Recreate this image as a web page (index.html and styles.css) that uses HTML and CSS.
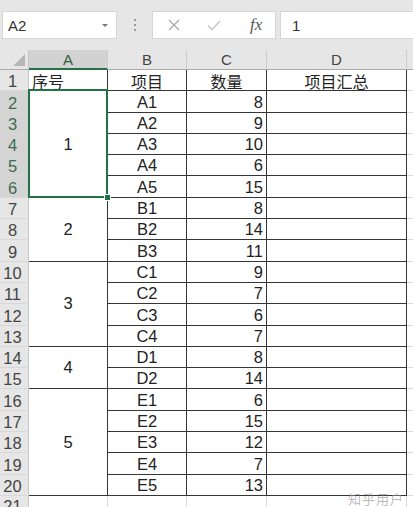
FILE: index.html
```html
<!DOCTYPE html>
<html lang="zh-CN">
<head>
    <meta charset="UTF-8">
    <title>序号汇总</title>
    <link rel="stylesheet" href="styles.css">
</head>
<body>

<div class="bar">
    <div class="name-box">
        <span>A2</span>
        <span class="drop"></span>
    </div>
    <div class="grip"><i></i><i></i><i></i></div>
    <div class="fx-box">
        <svg class="ico" width="14" height="14" viewBox="0 0 14 14"><path d="M2 2L12 12M12 2L2 12" stroke="#a8a8a8" stroke-width="1.3" fill="none"/></svg>
        <svg class="ico" width="16" height="14" viewBox="0 0 16 14"><path d="M2 7.5L6 11.5L14 3" stroke="#c4c4c4" stroke-width="1.4" fill="none"/></svg>
        <span class="fx">fx</span>
    </div>
    <div class="formula">1</div>
</div>

<div class="sheet">
    <!-- header row -->
    <div class="corner"></div>
    <div class="ch on">A</div><div class="ch">B</div><div class="ch">C</div><div class="ch">D</div><div class="ch"></div>

    <div class="rh">1</div><div class="c b left zh">序号</div><div class="c b mid zh">项目</div><div class="c b mid zh">数量</div><div class="c b mid zh">项目汇总</div><div class="c"></div>

    <!-- group 1 -->
    <div class="rh on">2</div><div class="c b mid merged sel span5">1</div><div class="c b mid">A1</div><div class="c b right">8</div><div class="c b"></div><div class="c"></div>
    <div class="rh on">3</div><div class="c b mid">A2</div><div class="c b right">9</div><div class="c b"></div><div class="c"></div>
    <div class="rh on">4</div><div class="c b mid">A3</div><div class="c b right">10</div><div class="c b"></div><div class="c"></div>
    <div class="rh on">5</div><div class="c b mid">A4</div><div class="c b right">6</div><div class="c b"></div><div class="c"></div>
    <div class="rh on">6</div><div class="c b mid">A5</div><div class="c b right">15</div><div class="c b"></div><div class="c"></div>

    <!-- group 2 -->
    <div class="rh">7</div><div class="c b mid merged span3">2</div><div class="c b mid">B1</div><div class="c b right">8</div><div class="c b"></div><div class="c"></div>
    <div class="rh">8</div><div class="c b mid">B2</div><div class="c b right">14</div><div class="c b"></div><div class="c"></div>
    <div class="rh">9</div><div class="c b mid">B3</div><div class="c b right">11</div><div class="c b"></div><div class="c"></div>

    <!-- group 3 -->
    <div class="rh">10</div><div class="c b mid merged span4">3</div><div class="c b mid">C1</div><div class="c b right">9</div><div class="c b"></div><div class="c"></div>
    <div class="rh">11</div><div class="c b mid">C2</div><div class="c b right">7</div><div class="c b"></div><div class="c"></div>
    <div class="rh">12</div><div class="c b mid">C3</div><div class="c b right">6</div><div class="c b"></div><div class="c"></div>
    <div class="rh">13</div><div class="c b mid">C4</div><div class="c b right">7</div><div class="c b"></div><div class="c"></div>

    <!-- group 4 -->
    <div class="rh">14</div><div class="c b mid merged span2">4</div><div class="c b mid">D1</div><div class="c b right">8</div><div class="c b"></div><div class="c"></div>
    <div class="rh">15</div><div class="c b mid">D2</div><div class="c b right">14</div><div class="c b"></div><div class="c"></div>

    <!-- group 5 -->
    <div class="rh">16</div><div class="c b mid merged span5">5</div><div class="c b mid">E1</div><div class="c b right">6</div><div class="c b"></div><div class="c"></div>
    <div class="rh">17</div><div class="c b mid">E2</div><div class="c b right">15</div><div class="c b"></div><div class="c"></div>
    <div class="rh">18</div><div class="c b mid">E3</div><div class="c b right">12</div><div class="c b"></div><div class="c"></div>
    <div class="rh">19</div><div class="c b mid">E4</div><div class="c b right">7</div><div class="c b"></div><div class="c"></div>
    <div class="rh">20</div><div class="c b mid">E5</div><div class="c b right">13</div><div class="c b"></div><div class="c"></div>

    <div class="rh">21</div><div class="c"></div><div class="c"></div><div class="c"></div><div class="c"></div><div class="c"></div>

    <div class="mark">知乎用户</div>
</div>

</body>
</html>
```

FILE: styles.css
```css
body {
    margin: 0;
    background-color: #fff;
    font-family: "Liberation Sans", "Noto Sans CJK SC", sans-serif;
    color: #222;
    overflow: hidden;
}

/* formula bar */
.bar {
    height: 50px;
    background-color: #e6e6e6;
    display: flex;
    align-items: center;
    padding-left: 2px;
    box-sizing: border-box;
}
.name-box {
    width: 115px;
    height: 28px;
    background-color: #fff;
    border: 1px solid #d6d6d6;
    box-sizing: border-box;
    display: flex;
    align-items: center;
    justify-content: space-between;
    padding: 0 8px 0 5px;
    font-size: 15px;
    color: #333;
}
.drop {
    width: 0;
    height: 0;
    border-left: 3px solid transparent;
    border-right: 3px solid transparent;
    border-top: 3px solid #777;
}
.grip {
    width: 35px;
    display: flex;
    flex-direction: column;
    align-items: center;
    gap: 3px;
}
.grip i {
    width: 2px;
    height: 2px;
    background-color: #9a9a9a;
}
.fx-box {
    width: 124px;
    height: 28px;
    background-color: #fff;
    border: 1px solid #d6d6d6;
    box-sizing: border-box;
    display: flex;
    align-items: center;
    padding-left: 14px;
    gap: 25px;
}
.fx {
    font-family: "Liberation Serif", serif;
    font-style: italic;
    font-size: 17px;
    color: #555;
    margin-left: 3px;
}
.formula {
    flex: 1;
    height: 28px;
    margin-left: 4px;
    background-color: #fff;
    border: 1px solid #d6d6d6;
    border-right: none;
    box-sizing: border-box;
    display: flex;
    align-items: center;
    padding-left: 11px;
    font-size: 15px;
    color: #333;
}

/* sheet grid */
.sheet {
    position: relative;
    display: grid;
    grid-template-columns: 29px 79px 79px 80px 140px 1fr;
    grid-template-rows: 20px repeat(20, 21.3px) 20px;
}
.sheet > div {
    box-sizing: border-box;
}
.corner {
    background-color: #e6e6e6;
    border-right: 1px solid #c6c6c6;
    border-bottom: 1px solid #ababab;
    display: flex;
    justify-content: flex-end;
    align-items: flex-end;
    padding: 0 3px 3px 0;
}
.corner::after {
    content: "";
    width: 0;
    height: 0;
    border-left: 12px solid transparent;
    border-bottom: 12px solid #b6b6b6;
}
.ch {
    background-color: #e6e6e6;
    border-right: 1px solid #cdcdcd;
    border-bottom: 1px solid #ababab;
    text-align: center;
    font-size: 15px;
    line-height: 20px;
    color: #444;
}
.ch.on {
    background-color: #d2d2d2;
    border-bottom: 2px solid #217346;
    color: #2f5f40;
}
.rh {
    background-color: #e6e6e6;
    border-right: 1px solid #c6c6c6;
    border-bottom: 1px solid #d8d8d8;
    font-size: 16.5px;
    color: #444;
    display: flex;
    align-items: flex-end;
    justify-content: center;
    padding-right: 3px;
    line-height: 18px;
    overflow: hidden;
}
.rh.on {
    background-color: #d4d4d4;
    color: #3d6b4f;
}

.c {
    border-right: 1px solid #dadada;
    border-bottom: 1px solid #dadada;
    font-size: 16.5px;
    line-height: 18px;
    display: flex;
    align-items: flex-end;
    padding: 0 3px 1px;
}
.c.b {
    border-right-color: #363636;
    border-bottom-color: #363636;
}
.zh {
    font-family: "Noto Sans CJK SC", sans-serif;
    font-size: 16px;
    padding-bottom: 0;
}
.left { justify-content: flex-start; }
.mid { justify-content: center; }
.right { justify-content: flex-end; }

.merged {
    align-items: center;
    position: relative;
}
.span2 { grid-row: span 2; }
.span3 { grid-row: span 3; }
.span4 { grid-row: span 4; }
.span5 { grid-row: span 5; }

/* active selection frame with fill handle */
.sel::after {
    content: "";
    position: absolute;
    left: -1px;
    top: -2px;
    right: -1px;
    bottom: -1px;
    border: 2px solid #217346;
}
.sel::before {
    content: "";
    position: absolute;
    right: -4px;
    bottom: -4px;
    width: 5px;
    height: 5px;
    background-color: #217346;
    border: 1px solid #fff;
    z-index: 1;
}

.mark {
    position: absolute;
    right: 9px;
    bottom: 8px;
    font-family: "Noto Sans CJK SC", sans-serif;
    font-size: 13px;
    color: rgba(140, 140, 140, 0.6);
    letter-spacing: 1px;
}
```
